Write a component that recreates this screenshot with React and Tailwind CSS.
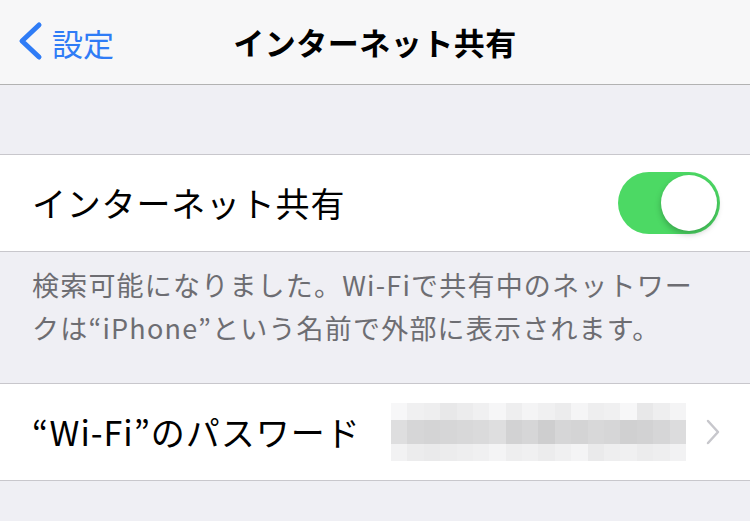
import React from "react";

const blur = [
  [247, 240, 238, 232, 236, 240, 246, 238, 244, 240, 236, 245, 238, 240, 247, 232, 238, 244],
  [222, 214, 212, 214, 216, 218, 222, 210, 214, 206, 214, 212, 216, 214, 208, 210, 214, 220],
  [242, 236, 234, 236, 238, 240, 244, 238, 240, 236, 240, 244, 234, 238, 240, 236, 238, 242],
];

function Toggle() {
  return (
    <div className="relative h-[62px] w-[102px] rounded-full bg-[#4cd964]">
      <div className="absolute right-[3px] top-[3px] h-[56px] w-[56px] rounded-full bg-white shadow-[0_3px_6px_rgba(0,0,0,0.25)]" />
    </div>
  );
}

function Blurred() {
  return (
    <div className="flex flex-col">
      {blur.map((row, i) => (
        <div key={i} className={i === 1 ? "flex h-[24px]" : "flex h-[17px]"}>
          {row.map((v, j) => (
            <div
              key={j}
              className="h-full w-[16.4px]"
              style={{ backgroundColor: `rgb(${v},${v},${v + 1})` }}
            />
          ))}
        </div>
      ))}
    </div>
  );
}

export default function App() {
  return (
    <div
      className="h-[521px] w-[750px] overflow-hidden bg-[#efeff4] text-black"
      style={{ fontFamily: '"Noto Sans CJK JP", "Noto Sans", sans-serif' }}
    >
      <header className="relative flex h-[85px] items-center justify-center border-b border-[#b2b2b2] bg-[#f7f7f8]">
        <div className="absolute left-[16px] top-0 flex h-[84px] items-center gap-[8px] text-[#2f7cf6]">
          <svg width="28" height="40" viewBox="0 0 28 40" className="-mt-[2px]">
            <path d="M23 4 L6 20 L23 36" fill="none" stroke="#2f7cf6" strokeWidth="5" strokeLinecap="round" strokeLinejoin="round" />
          </svg>
          <span className="text-[31px] leading-none">設定</span>
        </div>
        <h1 className="-mt-[2px] text-[31px] font-bold leading-none tracking-[0.5px]">インターネット共有</h1>
      </header>

      <div className="h-[69px]" />

      <div className="flex h-[98px] items-center justify-between border-y border-[#c8c7cc] bg-white pl-[32px] pr-[30px]">
        <span className="text-[34px] leading-none tracking-[0.8px]">インターネット共有</span>
        <Toggle />
      </div>

      <p className="h-[131px] whitespace-nowrap px-[32px] pt-[11px] text-[27px] leading-[43px] tracking-[1.2px] text-[#6d6d72]">
        検索可能になりました。Wi-Fiで共有中のネットワー
        <br />
        クは“iPhone”という名前で外部に表示されます。
      </p>

      <div className="flex h-[98px] items-center border-y border-[#c8c7cc] bg-white pl-[32px] pr-[30px]">
        <span className="text-[34px] leading-none tracking-[1px]">“Wi-Fi”のパスワード</span>
        <div className="ml-auto flex items-center gap-[20px]">
          <Blurred />
          <svg width="14" height="26" viewBox="0 0 14 26">
            <path d="M2 2 L12 13 L2 24" fill="none" stroke="#c7c7cc" strokeWidth="2.5" strokeLinecap="round" strokeLinejoin="round" />
          </svg>
        </div>
      </div>
    </div>
  );
}
